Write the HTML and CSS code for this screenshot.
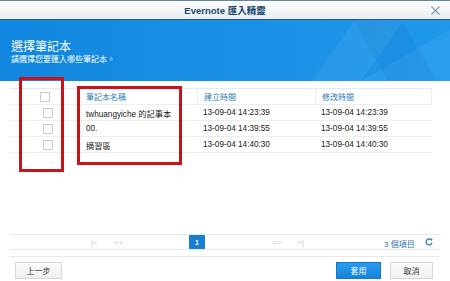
FILE: index.html
```html
<!DOCTYPE html>
<html>
<head>
<meta charset="utf-8">
<link rel="stylesheet" href="styles.css">
</head>
<body>
<div class="win">
  <div class="titlebar">
    <span class="title">Evernote 匯入精靈</span>
    <svg class="close" width="9" height="9" viewBox="0 0 9 9"><path d="M0.5 0.5 L8.5 8.5 M8.5 0.5 L0.5 8.5" stroke="#8a9aa8" stroke-width="1.1"/></svg>
  </div>
  <div class="banner">
    <div class="facets"></div>
    <div class="b-title">選擇筆記本</div>
    <div class="b-sub">請選擇您要匯入哪些筆記本。</div>
  </div>
  <div class="content">
    <div class="grid">
      <div class="row head">
        <div class="c cb"><span class="box hbox"></span></div>
        <div class="c">筆記本名稱</div>
        <div class="c sep">建立時間</div>
        <div class="c sep">修改時間</div>
      </div>
      <div class="row">
        <div class="c cb"><span class="box"></span></div>
        <div class="c">twhuangyiche 的記事本</div>
        <div class="c">13-09-04 14:23:39</div>
        <div class="c">13-09-04 14:23:39</div>
      </div>
      <div class="row">
        <div class="c cb"><span class="box"></span></div>
        <div class="c">00.</div>
        <div class="c">13-09-04 14:39:55</div>
        <div class="c">13-09-04 14:39:55</div>
      </div>
      <div class="row">
        <div class="c cb"><span class="box"></span></div>
        <div class="c">摘習區</div>
        <div class="c">13-09-04 14:40:30</div>
        <div class="c">13-09-04 14:40:30</div>
      </div>
    </div>
    <div class="mark mark1"></div>
    <div class="mark mark2"></div>
  </div>
  <div class="pager">
    <span class="pg first">|&lt;</span>
    <span class="pg prev">&lt;&lt;</span>
    <span class="page">1</span>
    <span class="pg next">&gt;&gt;</span>
    <span class="pg last">&gt;|</span>
    <span class="count">3 個項目</span>
    <svg class="refresh" width="8" height="8" viewBox="0 0 8 8"><path d="M6.6 2.2 A3 3 0 1 0 7 4.6" fill="none" stroke="#2a78c0" stroke-width="1.3"/><path d="M5 0.6 L7.4 0.8 L7 3.2 Z" fill="#2a78c0"/></svg>
  </div>
  <div class="footer">
    <span class="btn">上一步</span>
    <span class="spacer"></span>
    <span class="btn primary">套用</span>
    <span class="btn cancel">取消</span>
  </div>
</div>
</body>
</html>
```
FILE: styles.css
```css
* { box-sizing: border-box; }
html, body { margin: 0; padding: 0; background: #fff; }
body {
  width: 450px; height: 281px; overflow: hidden;
  font-family: "Liberation Sans", "Noto Sans CJK TC", sans-serif;
  color: #1a1a1a;
}
.win { width: 450px; height: 281px; display: flex; flex-direction: column; }
.titlebar {
  height: 20px;
  border-top: 1px solid #5d86a8;
  border-bottom: 1px solid #24598a;
  background: linear-gradient(#fdfdfd, #e9eef2);
  display: flex; align-items: center; justify-content: center;
  position: relative;
}
.title { font-size: 9.5px; font-weight: bold; color: #1f4a6e; }
.close { position: absolute; right: 10px; top: 5px; }
.banner {
  height: 61px;
  background: linear-gradient(90deg, #1186de 0%, #1a91e6 60%, #1f98ea 100%);
  color: #fff;
  padding: 20px 0 0 11px;
  position: relative; overflow: hidden;
}
.facets {
  position: absolute; inset: 0;
  background:
    linear-gradient(125deg, transparent 72%, rgba(255,255,255,0.06) 72%, rgba(255,255,255,0.06) 82%, transparent 82%),
    linear-gradient(60deg, transparent 80%, rgba(0,60,140,0.08) 80%, rgba(0,60,140,0.08) 90%, transparent 90%),
    linear-gradient(150deg, transparent 84%, rgba(120,200,255,0.12) 84%);
}
.b-title { font-size: 12px; line-height: 14px; position: relative; }
.b-sub { font-size: 8px; line-height: 10px; position: relative; margin-top: 1px; }
.content { height: 153px; position: relative; padding: 7px 18px 0 10px; }
.grid { border-top: 1px solid #e6e9ec; }
.row {
  display: grid;
  grid-template-columns: 70px 117px 118px 117px;
  height: 16px;
  border-bottom: 1px solid #eceef0;
  font-size: 8.2px;
  align-items: center;
}
.row .c { padding-left: 6px; white-space: nowrap; height: 100%; display: flex; align-items: center; }
.head .c { color: #2b7db8; font-size: 8px; }
.head .sep { border-left: 1px solid #eceef0; }
.head .c:last-child { border-right: 1px solid #eceef0; }
.cb { padding-left: 33px !important; }
.box { width: 10px; height: 10px; border: 1px solid #c9cdd1; background: #fff; display: block; }
.hbox { margin-left: -3px; }
.mark { position: absolute; border: 3px solid #c8121c; }
.mark1 { left: 19px; top: -4px; width: 45px; height: 95px; }
.mark2 { left: 77px; top: 5px; width: 105px; height: 79px; }
.pager {
  margin: 0 10px;
  height: 16px;
  border-top: 1px solid #e6e9ec;
  border-bottom: 1px solid #e6e9ec;
  display: flex; align-items: center;
  font-size: 8px; color: #c2c8ce;
  position: relative;
}
.pg { position: absolute; top: 3px; }
.first { left: 81px; }
.prev { left: 104px; }
.next { left: 262px; }
.last { left: 287px; }
.page {
  position: absolute; left: 179px; top: 0; width: 16px; height: 14px;
  background: #1a7fd4; color: #fff; font-weight: bold;
  display: flex; align-items: center; justify-content: center; font-size: 7px;
}
.count { position: absolute; left: 374px; top: 3px; color: #2a6fa8; }
.refresh { position: absolute; left: 415px; top: 3px; }
.footer {
  margin: 6px 10px 0 10px;
  border-top: 1px solid #e6e9ec;
  padding: 5px 7px 0 5px;
  display: flex; align-items: flex-start;
}
.spacer { flex: 1; }
.btn {
  width: 47px; height: 17px;
  border: 1px solid #d5d9dc;
  background: linear-gradient(#fbfbfb, #eef0f2);
  font-size: 8px; color: #333;
  display: flex; align-items: center; justify-content: center;
}
.primary { background: linear-gradient(#2a9af0, #1683d8); border-color: #1477c6; color: #fff; width: 45px; }
.cancel { width: 43px; margin-left: 9px; }
```
